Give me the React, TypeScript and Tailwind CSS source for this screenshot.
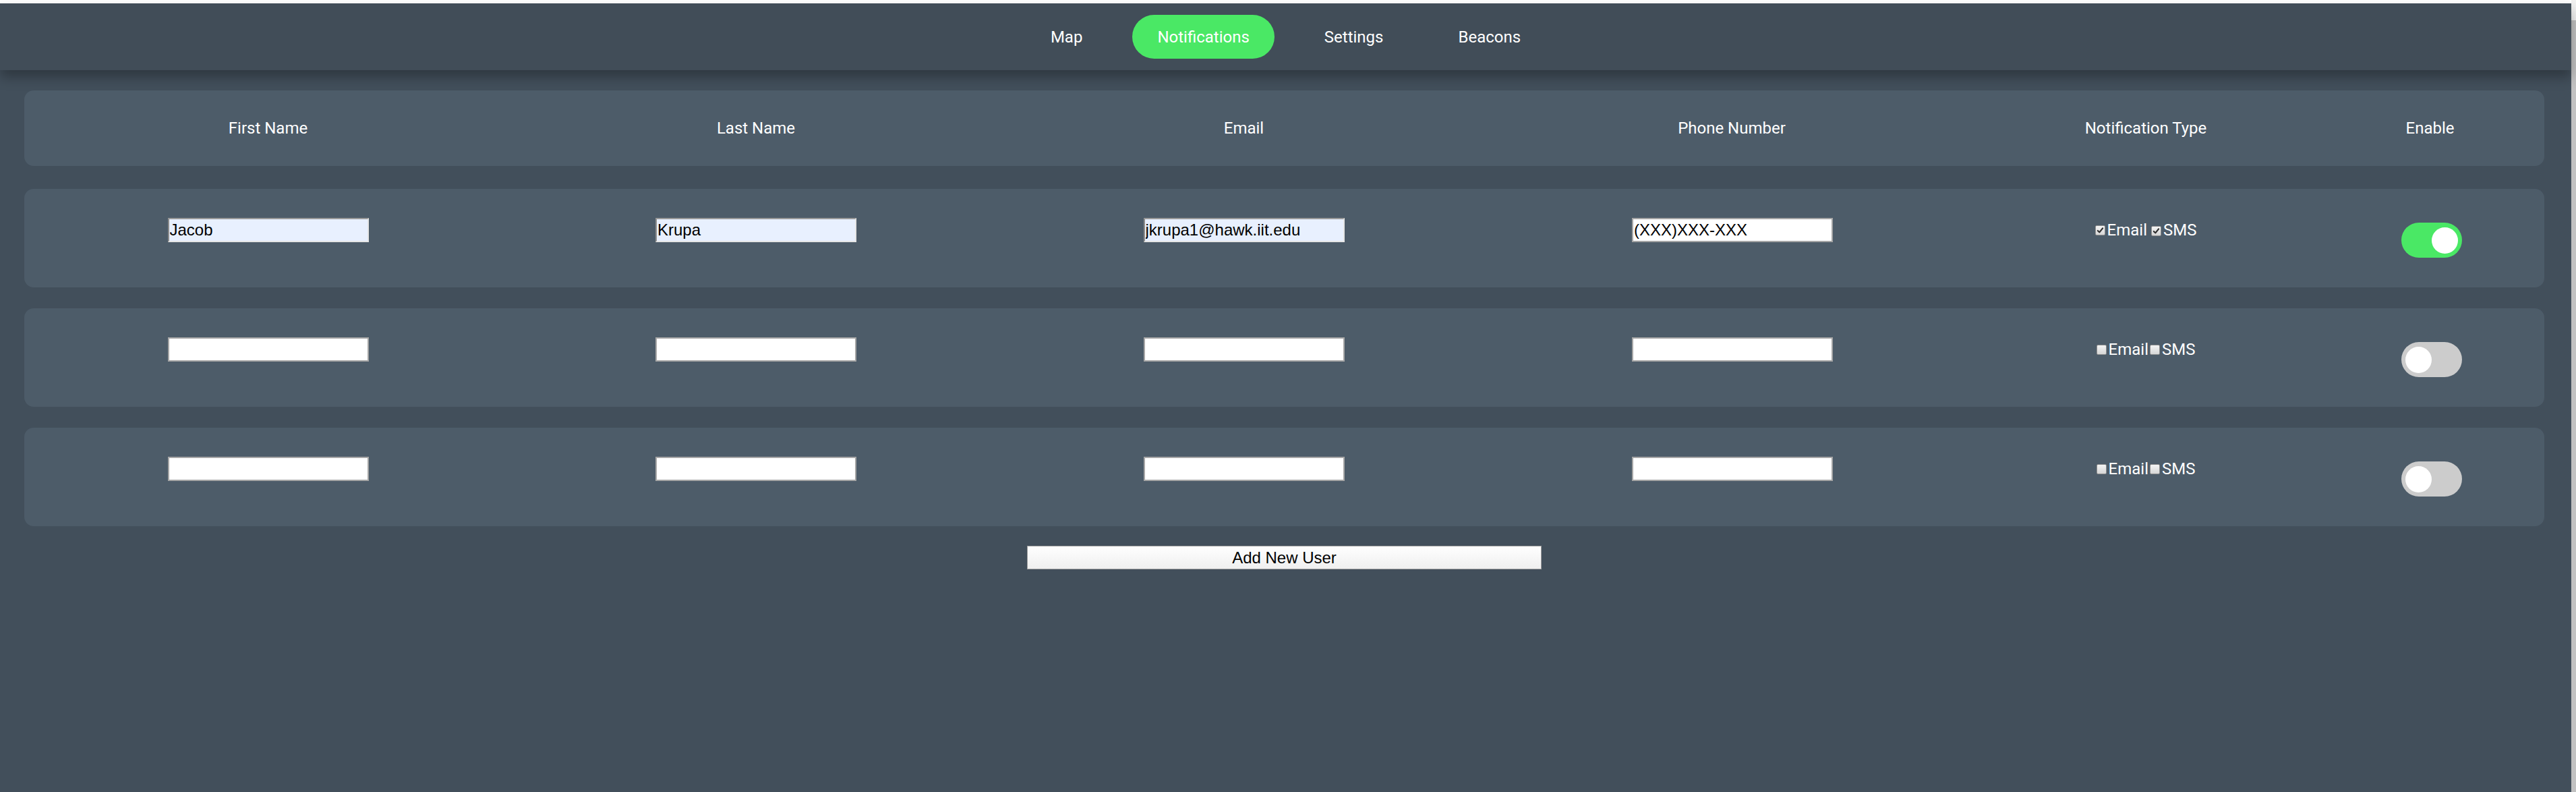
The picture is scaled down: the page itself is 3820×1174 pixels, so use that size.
import React from "react";

const navItems = ["Map", "Notifications", "Settings", "Beacons"];
const columns = ["First Name", "Last Name", "Email", "Phone Number", "Notification Type", "Enable"];

type User = {
  first: string;
  last: string;
  email: string;
  phone: string;
  emailOn: boolean;
  smsOn: boolean;
  enabled: boolean;
  filled: boolean;
};

const users: User[] = [
  { first: "Jacob", last: "Krupa", email: "jkrupa1@hawk.iit.edu", phone: "(XXX)XXX-XXX", emailOn: true, smsOn: true, enabled: true, filled: true },
  { first: "", last: "", email: "", phone: "", emailOn: false, smsOn: false, enabled: false, filled: false },
  { first: "", last: "", email: "", phone: "", emailOn: false, smsOn: false, enabled: false, filled: false },
];

const grid = "grid grid-cols-[723px_724px_723px_724px_504px_339px]";

function Field({ value, autofill }: { value: string; autofill?: boolean }) {
  // autofilled fields keep the old inset look with the pale blue fill
  const look = autofill
    ? "border-2 border-t-[#9b9b9b] border-l-[#8c8c8c] border-r-[#e6e6e6] border-b-[#e6e6e6] bg-[#e8f0fe]"
    : "border-2 border-[#a6a6a6] bg-white";
  return (
    <input
      readOnly
      value={value}
      className={`h-[36px] w-[298px] px-px font-['Liberation_Sans',Arial,sans-serif] text-[24px] leading-none text-black outline-none ${look}`}
    />
  );
}

function Box({ checked }: { checked: boolean }) {
  return (
    <span className="inline-flex h-[15px] w-[15px] shrink-0 items-center justify-center rounded-[2px] border border-[#8f8f8f] bg-gradient-to-b from-[#f4f4f4] to-[#d6d6d6]">
      {checked && (
        <svg viewBox="0 0 16 16" className="h-[13px] w-[13px]" fill="none" stroke="#2f2f2f" strokeWidth={2.6} strokeLinecap="round" strokeLinejoin="round">
          <path d="M3.5 8.5l3 3 6-7.5" />
        </svg>
      )}
    </span>
  );
}

function Toggle({ on }: { on: boolean }) {
  return (
    <div
      className={`flex h-[52px] w-[90px] items-center rounded-full px-[6px] ${
        on ? "justify-end bg-[#4ae865]" : "justify-start bg-[#cccccc]"
      }`}
    >
      <span className="h-[39px] w-[39px] rounded-full bg-white" />
    </div>
  );
}

export default function App() {
  return (
    <div className="flex h-screen w-full overflow-hidden bg-white font-['Roboto',sans-serif]">
      <div className="flex flex-1 flex-col pt-[5px]">
        <div className="flex flex-1 flex-col bg-[#424f5b]">
          <nav className="relative z-10 flex h-[99px] items-center justify-center gap-[37px] bg-[#414d58] shadow-[0_10px_18px_rgba(0,0,0,0.3)]">
            {navItems.map((item) => (
              <span
                key={item}
                className={`flex h-[65px] items-center rounded-full px-[37px] text-[24px] text-white ${
                  item === "Notifications" ? "bg-[#4ae865]" : ""
                }`}
              >
                {item}
              </span>
            ))}
          </nav>

          <main className="flex flex-col pl-[36px] pr-[40px] pt-[30px]">
            <div className={`${grid} h-[112px] items-center rounded-[14px] bg-[#4d5c69]`}>
              {columns.map((c) => (
                <div key={c} className="text-center text-[24px] text-white">
                  {c}
                </div>
              ))}
            </div>

            <div className="mt-[34px] flex flex-col gap-[31px]">
              {users.map((u, i) => (
                <div key={i} className={`${grid} h-[146px] items-start rounded-[14px] bg-[#4d5c69] pt-[43px]`}>
                  <div className="flex justify-center">
                    <Field value={u.first} autofill={u.filled} />
                  </div>
                  <div className="flex justify-center">
                    <Field value={u.last} autofill={u.filled} />
                  </div>
                  <div className="flex justify-center">
                    <Field value={u.email} autofill={u.filled} />
                  </div>
                  <div className="flex justify-center pl-[2px]">
                    <Field value={u.phone} />
                  </div>
                  <div className="flex h-[36px] items-center justify-center text-[24px] text-white">
                    <Box checked={u.emailOn} />
                    <span className="ml-[3px]">Email</span>
                    <span className={u.emailOn ? "ml-[6px]" : "ml-[2px]"}>
                      <Box checked={u.smsOn} />
                    </span>
                    <span className="ml-[3px]">SMS</span>
                  </div>
                  <div className="mt-[7px] flex justify-center pl-[4px]">
                    <Toggle on={u.enabled} />
                  </div>
                </div>
              ))}
            </div>

            <div className="mt-[29px] flex justify-center">
              <button className="h-[35px] w-[763px] border border-[#9f9f9f] bg-gradient-to-b from-white to-[#efefef] font-['Liberation_Sans',Arial,sans-serif] text-[24px] leading-none text-black">
                Add New User
              </button>
            </div>
          </main>
        </div>
      </div>

      <div className="flex w-[7px] flex-col bg-[#f1f1f1]">
        <div className="h-[30px]" />
        <div className="flex-1 bg-[#c1c1c1]" />
      </div>
    </div>
  );
}
